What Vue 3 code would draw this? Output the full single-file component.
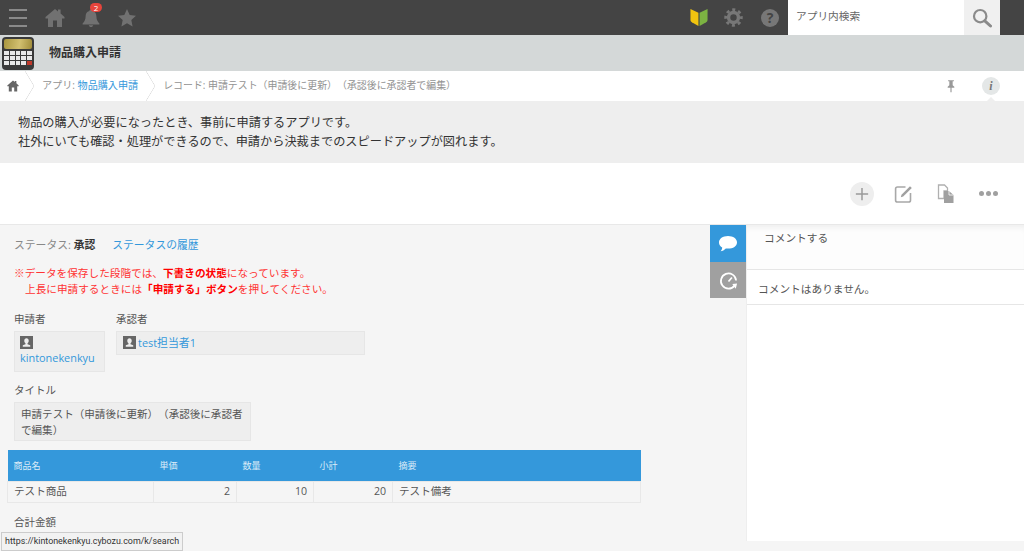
<template>
  <div class="page">
    <header class="topbar">
      <div class="top-left">
        <button class="menu-btn"><span></span><span></span><span></span></button>
        <svg class="top-icon home" viewBox="0 0 20 20"><path d="M10 1 L13 3.4 V1.6 H15.6 V5.5 L19.5 9 V10.6 H17 V19 H12 V12.5 H8 V19 H3 V10.6 H.5 V9 Z" /></svg>
        <div class="bell-wrap">
          <svg class="top-icon bell" viewBox="0 0 20 20"><path d="M10 1.5 C11 1.5 11.6 2.2 11.6 3 C14.4 3.8 15.4 6 15.4 8.6 C15.4 11.6 16.4 13.6 18.4 15.4 V16.4 H1.6 V15.4 C3.6 13.6 4.6 11.6 4.6 8.6 C4.6 6 5.6 3.8 8.4 3 C8.4 2.2 9 1.5 10 1.5 Z M7.8 17.2 H12.2 C12 18.4 11.1 19 10 19 C8.9 19 8 18.4 7.8 17.2 Z" /></svg>
          <span class="badge">2</span>
        </div>
        <svg class="top-icon star" viewBox="0 0 20 20"><path d="M10 1 L12.7 7 L19 7.7 L14.3 12 L15.6 18.6 L10 15.3 L4.4 18.6 L5.7 12 L1 7.7 L7.3 7 Z" /></svg>
      </div>
      <div class="top-right">
        <svg class="leaf" viewBox="0 0 18 20">
          <path d="M0 1 L8.4 5 V19 L1.5 15 C.5 14.4 0 13.6 0 12.4 Z" fill="#f1c40f" />
          <path d="M18 1 L9.6 5 V19 L16.5 15 C17.5 14.4 18 13.6 18 12.4 Z" fill="#7cb342" />
        </svg>
        <svg class="gear" viewBox="0 0 20 20" fill="none" stroke="#777">
          <circle cx="10" cy="10" r="8.2" stroke-width="3" stroke-dasharray="3.22 3.22" stroke-dashoffset="1.6" />
          <circle cx="10" cy="10" r="5.2" stroke-width="3.6" />
        </svg>
        <div class="help">?</div>
        <div class="search">
          <span class="search-text">アプリ内検索</span>
          <div class="search-btn">
            <svg viewBox="0 0 20 20"><circle cx="8.2" cy="8.2" r="6.2" fill="none" stroke="#8a8a8a" stroke-width="2.2" /><path d="M12.8 12.8 L18.5 18" stroke="#8a8a8a" stroke-width="3" stroke-linecap="round" /></svg>
          </div>
        </div>
      </div>
    </header>

    <div class="appbar">
      <div class="app-logo">
        <div class="logo-screen"></div>
        <div class="logo-keys">
          <i v-for="n in 15" :key="n" :class="{ red: n === 15 }"></i>
        </div>
      </div>
      <span class="app-name">物品購入申請</span>
    </div>

    <nav class="crumbs">
      <div class="crumb-list">
        <div class="crumb first">
          <svg viewBox="0 0 20 20"><path d="M10 1 L13 3.4 V1.6 H15.6 V5.5 L19.5 9 V10.6 H17 V19 H12 V12.5 H8 V19 H3 V10.6 H.5 V9 Z" /></svg>
        </div>
        <div class="crumb">アプリ: <a>物品購入申請</a></div>
        <div class="crumb last">レコード: 申請テスト（申請後に更新）（承認後に承認者で編集）</div>
      </div>
      <div class="crumb-right">
        <svg class="pin" viewBox="0 0 12 16"><path d="M2.5 1 H9.5 V2.4 H8 V7 L10 9 V10 H6.7 V15.5 H5.3 V10 H2 V9 L4 7 V2.4 H2.5 Z" /></svg>
        <div class="info"><i>i</i></div>
      </div>
    </nav>

    <section class="desc">
      <p>物品の購入が必要になったとき、事前に申請するアプリです。</p>
      <p>社外にいても確認・処理ができるので、申請から決裁までのスピードアップが図れます。</p>
    </section>

    <div class="toolbar">
      <div class="tool add">
        <svg viewBox="0 0 16 16"><path d="M8 1 V15 M1 8 H15" stroke="#999" stroke-width="1.7" /></svg>
      </div>
      <div class="tool">
        <svg viewBox="0 0 20 20" fill="none"><path d="M11.5 3 H3.5 C2.4 3 1.6 3.8 1.6 4.8 V16.2 C1.6 17.2 2.4 18 3.5 18 H14.6 C15.7 18 16.5 17.2 16.5 16.2 V9" stroke="#a8a8a8" stroke-width="1.6" /><path d="M6.8 13.2 L7.5 10.8 L16 2.2 L17.8 4 L9.2 12.5 Z" fill="#a0a0a0" /></svg>
      </div>
      <div class="tool">
        <svg viewBox="0 0 20 20"><path d="M2.5 1 H8.5 L11.5 4 V7 H8 V14.5 H2.5 Z" fill="none" stroke="#b0b0b0" stroke-width="1.3" /><path d="M8 7 H13 L17.5 11 V19 H8 Z" fill="#a0a0a0" /><path d="M13 7 V11 H17.5" fill="none" stroke="#fff" stroke-width=".8" /></svg>
      </div>
      <div class="dots"><span></span><span></span><span></span></div>
    </div>

    <main class="content">
      <div class="record">
        <div class="status-row">
          <span class="status-label">ステータス: <b>承認</b></span>
          <a class="history">ステータスの履歴</a>
        </div>
        <div class="notice">
          <p>※データを保存した段階では、<b>下書きの状態</b>になっています。</p>
          <p class="indent">上長に申請するときには<b>「申請する」ボタン</b>を押してください。</p>
        </div>

        <div class="people">
          <div class="field">
            <div class="field-label">申請者</div>
            <div class="value applicant">
              <span class="user-icon"><svg viewBox="0 0 14 14"><path d="M0 0 H14 V14 H0 Z M7 2.5 C5.5 2.5 4.6 3.6 4.6 5.2 C4.6 6.4 5.1 7.4 5.9 7.9 V8.8 L3 10 V11.5 H11 V10 L8.1 8.8 V7.9 C8.9 7.4 9.4 6.4 9.4 5.2 C9.4 3.6 8.5 2.5 7 2.5 Z" fill="#666" fill-rule="evenodd" /></svg></span>
              <a class="user-link">kintonekenkyu</a>
            </div>
          </div>
          <div class="field">
            <div class="field-label">承認者</div>
            <div class="value approver">
              <span class="user-icon"><svg viewBox="0 0 14 14"><path d="M0 0 H14 V14 H0 Z M7 2.5 C5.5 2.5 4.6 3.6 4.6 5.2 C4.6 6.4 5.1 7.4 5.9 7.9 V8.8 L3 10 V11.5 H11 V10 L8.1 8.8 V7.9 C8.9 7.4 9.4 6.4 9.4 5.2 C9.4 3.6 8.5 2.5 7 2.5 Z" fill="#666" fill-rule="evenodd" /></svg></span><a class="user-link">test担当者1</a>
            </div>
          </div>
        </div>

        <div class="field title-field">
          <div class="field-label">タイトル</div>
          <div class="value title-value">申請テスト（申請後に更新）（承認後に承認者で編集）</div>
        </div>

        <table class="items">
          <thead>
            <tr>
              <th v-for="c in columns" :key="c.label" :style="{ width: c.width + 'px' }">{{ c.label }}</th>
            </tr>
          </thead>
          <tbody>
            <tr>
              <td>テスト商品</td>
              <td class="num">2</td>
              <td class="num">10</td>
              <td class="num">20</td>
              <td>テスト備考</td>
            </tr>
          </tbody>
        </table>

        <div class="field-label total">合計金額</div>
      </div>

      <div class="tabs">
        <div class="tab blue">
          <svg viewBox="0 0 20 18"><path d="M10 1 C15.2 1 19 3.8 19 7.4 C19 11 15.2 13.6 10 13.6 C9.2 13.6 8.6 13.6 7.8 13.4 C6.4 15 4.4 16 2.6 16.2 C3.6 15.2 4.2 13.8 4.2 12.4 C2 11.2 1 9.4 1 7.4 C1 3.8 4.8 1 10 1 Z" fill="#fff" /></svg>
        </div>
        <div class="tab gray">
          <svg viewBox="0 0 20 20" fill="none"><path d="M16.4 15.4 A8 8 0 1 1 18 10" stroke="#fff" stroke-width="1.8" /><path d="M10 11 L13.6 6.8" stroke="#fff" stroke-width="1.8" /><path d="M14 13.6 L19 13.2 L17.6 18.6 Z" fill="#fff" /></svg>
        </div>
      </div>

      <aside class="side">
        <div class="comment-box">コメントする</div>
        <div class="no-comment">コメントはありません。</div>
      </aside>
    </main>

    <div class="url-tip">https://kintonekenkyu.cybozu.com/k/search</div>
  </div>
</template>

<script setup>
const columns = [
  { label: '商品名', width: 146 },
  { label: '単価', width: 83 },
  { label: '数量', width: 77 },
  { label: '小計', width: 79 },
  { label: '摘要', width: 248 }
]
</script>

<style>
html, body {
  margin: 0;
  overflow: hidden;
}
</style>

<style scoped>
.page {
  position: relative;
  width: 1024px;
  height: 551px;
  overflow: hidden;
  font-family: "Open Sans", "Noto Sans CJK JP", sans-serif;
  font-size: 11px;
  color: #333;
  background: #f5f5f5;
  text-spacing-trim: space-all;
}

p {
  margin: 0;
}

a {
  color: #3498db;
}

/* top bar */
.topbar {
  height: 35px;
  background: #444;
  display: flex;
  justify-content: space-between;
}

.top-left {
  display: flex;
  align-items: center;
  padding-left: 9px;
}

.menu-btn {
  width: 18px;
  height: 18px;
  padding: 0;
  border: none;
  background: none;
  display: flex;
  flex-direction: column;
  justify-content: space-between;
  margin-right: 18px;
}

.menu-btn span {
  display: block;
  height: 2px;
  background: #8a8a8a;
}

.top-icon {
  fill: #717171;
  width: 20px;
  height: 20px;
}

.bell-wrap {
  position: relative;
  width: 20px;
  height: 20px;
  margin: 0 16px;
}

.badge {
  position: absolute;
  top: -5px;
  left: 9px;
  width: 12px;
  height: 9px;
  line-height: 9px;
  border-radius: 5px;
  background: #e8453c;
  color: #fff;
  font-size: 8px;
  text-align: center;
}

.top-right {
  display: flex;
  align-items: center;
  padding-right: 24px;
}

.leaf {
  width: 18px;
  height: 19px;
  margin-right: 16px;
}

.gear {
  width: 19px;
  height: 19px;
  margin-right: 18px;
}

.help {
  width: 18px;
  height: 18px;
  border-radius: 50%;
  background: #777;
  color: #444;
  font-size: 14px;
  font-weight: 700;
  line-height: 18px;
  text-align: center;
  margin-right: 9px;
}

.search {
  width: 212px;
  height: 35px;
  background: #fff;
  display: flex;
  justify-content: space-between;
}

.search-text {
  padding-left: 8px;
  line-height: 32px;
  font-size: 10.7px;
  color: #666;
}

.search-btn {
  width: 36px;
  background: #f0f0f0;
  display: flex;
  align-items: center;
  justify-content: center;
}

.search-btn svg {
  width: 20px;
  height: 20px;
}

/* app name bar */
.appbar {
  height: 36px;
  background: #d4d8d8;
  display: flex;
  align-items: center;
}

.app-logo {
  width: 32px;
  height: 33px;
  margin-left: 2px;
  border-radius: 4px;
  background: #3a3a3a;
  padding: 2px;
  box-sizing: border-box;
}

.logo-screen {
  height: 10px;
  border-radius: 2px;
  background: linear-gradient(100deg, #a8963f, #d2c070 55%, #a08c3a);
}

.logo-keys {
  display: grid;
  grid-template-columns: repeat(5, 1fr);
  gap: 1px;
  margin-top: 2px;
}

.logo-keys i {
  height: 4px;
  background: #e8e8e8;
}

.logo-keys i.red {
  background: #c0392b;
}

.app-name {
  margin: 0 0 2px 15px;
  font-size: 12px;
  font-weight: 700;
  color: #333;
}

/* breadcrumb */
.crumbs {
  height: 30px;
  background: #fff;
  display: flex;
  justify-content: space-between;
  align-items: center;
}

.crumb-list {
  display: flex;
  height: 100%;
  color: #929292;
  font-size: 10.1px;
}

.crumb {
  position: relative;
  height: 100%;
  line-height: 29px;
  padding: 0 17px 0 8px;
  white-space: nowrap;
}

.crumb.last {
  font-size: 9.93px;
}

.crumb.first {
  width: 34px;
  box-sizing: border-box;
  padding: 0 0 0 7px;
  display: flex;
  align-items: center;
}

.crumb.first svg {
  width: 12px;
  height: 12px;
  fill: #666;
}

.crumb:not(.last)::after {
  content: "";
  position: absolute;
  right: 0;
  top: 0;
  width: 9px;
  height: 30px;
  background:
    linear-gradient(to top right, transparent calc(50% - 0.6px), #ddd, transparent calc(50% + 0.6px)) top / 100% 50% no-repeat,
    linear-gradient(to bottom right, transparent calc(50% - 0.6px), #ddd, transparent calc(50% + 0.6px)) bottom / 100% 50% no-repeat;
}

.crumb-right {
  display: flex;
  align-items: center;
  padding-right: 24px;
}

.pin {
  width: 10px;
  height: 14px;
  fill: #999;
  margin-right: 26px;
}

.info {
  position: relative;
  width: 18px;
  height: 18px;
  border-radius: 50%;
  background: #e4e7e7;
  text-align: center;
  line-height: 18px;
  font-family: "Liberation Serif", serif;
  font-size: 12px;
  font-weight: 700;
  color: #777;
}

.info::after {
  content: "";
  position: absolute;
  left: 4px;
  top: 20px;
  border: 5px solid transparent;
  border-top: none;
  border-bottom-color: #eee;
}

/* description */
.desc {
  height: 62px;
  box-sizing: border-box;
  background: #eee;
  padding: 12px 18px 0;
  font-size: 12.2px;
  line-height: 19px;
  color: #333;
}

/* toolbar */
.toolbar {
  height: 62px;
  background: #fff;
  border-bottom: 1px solid #e8e8e8;
  box-sizing: border-box;
  display: flex;
  align-items: center;
  justify-content: flex-end;
  padding-right: 26px;
  gap: 18px;
}

.tool {
  width: 24px;
  height: 24px;
  display: flex;
  align-items: center;
  justify-content: center;
}

.tool svg {
  width: 20px;
  height: 20px;
}

.tool.add {
  background: #eee;
  border-radius: 50%;
}

.tool.add svg {
  width: 14px;
  height: 14px;
}

.dots {
  display: flex;
  gap: 2px;
  margin-left: 3px;
}

.dots span {
  width: 5px;
  height: 5px;
  border-radius: 50%;
  background: #a0a0a0;
}

/* record area */
.content {
  display: flex;
  height: 326px;
}

.record {
  width: 710px;
  flex: none;
  padding: 11px 0 0 14px;
  box-sizing: border-box;
  color: #555;
}

.status-row {
  display: flex;
  gap: 17px;
  font-size: 10.8px;
  line-height: 18px;
}

.status-label {
  color: #888;
}

.status-label b {
  color: #333;
}

.notice {
  margin-top: 11px;
  color: #f33;
  font-size: 10.65px;
  line-height: 16px;
}

.notice b {
  color: #f00;
}

.indent {
  padding-left: 11px;
}

.people {
  display: flex;
  gap: 11px;
  margin-top: 14px;
}

.field-label {
  font-size: 10.5px;
  line-height: 16px;
  color: #555;
}

.value {
  background: #eee;
  border: 1px solid #e6e6e6;
  box-sizing: border-box;
  margin-top: 4px;
}

.applicant {
  width: 91px;
  height: 41px;
  padding: 4px 5px;
}

.approver {
  width: 249px;
  height: 24px;
  padding: 3px 6px;
  display: flex;
  align-items: center;
  gap: 2px;
}

.user-icon {
  display: block;
  height: 14px;
}

.user-icon svg {
  display: block;
  width: 13px;
  height: 13px;
}

.user-link {
  font-size: 10.9px;
  line-height: 16px;
}

.title-field {
  margin-top: 10px;
}

.title-value {
  width: 237px;
  height: 39px;
  padding: 3px 5px 0 6px;
  font-size: 10.55px;
  line-height: 16px;
}

.items {
  margin: 9px 0 0 -7px;
  width: 633px;
  border-collapse: collapse;
  table-layout: fixed;
  font-size: 10.6px;
}

.items th {
  box-sizing: border-box;
  height: 31px;
  padding: 0 6px;
  background: #3498db;
  color: #dcecf8;
  font-size: 9px;
  font-weight: 400;
  text-align: left;
}

.items td {
  height: 21px;
  padding: 0 6px 2px;
  box-sizing: border-box;
  border: 1px solid #e8e8e8;
  color: #555;
}

.items .num {
  text-align: right;
}

.total {
  margin-top: 11px;
}

/* tabs and comments */
.tabs {
  width: 36px;
  flex: none;
}

.tab {
  height: 37px;
  display: flex;
  align-items: center;
  justify-content: center;
}

.tab.blue {
  background: #3498db;
}

.tab.blue svg {
  width: 20px;
  height: 18px;
}

.tab.gray {
  height: 36px;
  background: #a0a0a0;
}

.tab.gray svg {
  width: 19px;
  height: 19px;
}

.side {
  flex: 1;
  height: 316px;
  background: #fff;
  border-left: 1px solid #eee;
}

.comment-box {
  height: 45px;
  box-sizing: border-box;
  padding: 5px 0 0 17px;
  background: #fdfdfd;
  box-shadow: inset 0 6px 6px -4px #ececec;
  border-bottom: 1px solid #e6e6e6;
  font-size: 10.7px;
  line-height: 16px;
  color: #555;
}

.no-comment {
  height: 35px;
  box-sizing: border-box;
  padding-left: 11px;
  line-height: 38px;
  border-bottom: 1px solid #e6e6e6;
  font-size: 10.7px;
  color: #555;
}

.url-tip {
  position: absolute;
  left: 1px;
  bottom: 0;
  width: 182px;
  height: 19px;
  box-sizing: border-box;
  padding: 0 3px;
  border: 1px solid #ccc;
  background: #f2f2f2;
  font-family: Roboto, sans-serif;
  font-size: 8.9px;
  line-height: 17px;
  color: #333;
  white-space: nowrap;
}
</style>
